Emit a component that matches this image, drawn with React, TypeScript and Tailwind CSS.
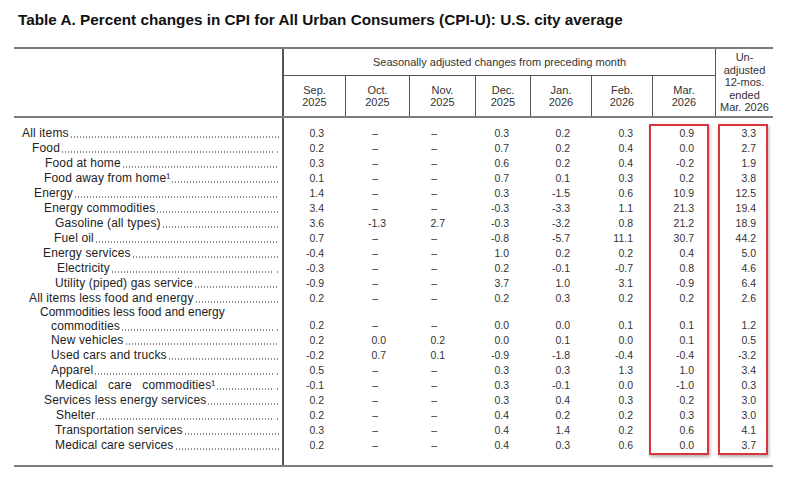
import React from "react";

type Row = {
  label: string;
  indent: number;
  values: string[];
  gap?: boolean;
  wide?: boolean;
  first?: string;
  firstIndent?: number;
};

const rows: Row[] = [
  { label: "All items", indent: 8, values: ["0.3", "–", "–", "0.3", "0.2", "0.3", "0.9", "3.3"] },
  { label: "Food", indent: 18, gap: true, values: ["0.2", "–", "–", "0.7", "0.2", "0.4", "0.0", "2.7"] },
  { label: "Food at home", indent: 31, values: ["0.3", "–", "–", "0.6", "0.2", "0.4", "-0.2", "1.9"] },
  { label: "Food away from home¹", indent: 30, values: ["0.1", "–", "–", "0.7", "0.1", "0.3", "0.2", "3.8"] },
  { label: "Energy", indent: 20, values: ["1.4", "–", "–", "0.3", "-1.5", "0.6", "10.9", "12.5"] },
  { label: "Energy commodities", indent: 30, values: ["3.4", "–", "–", "-0.3", "-3.3", "1.1", "21.3", "19.4"] },
  { label: "Gasoline (all types)", indent: 41, values: ["3.6", "-1.3", "2.7", "-0.3", "-3.2", "0.8", "21.2", "18.9"] },
  { label: "Fuel oil", indent: 40, values: ["0.7", "–", "–", "-0.8", "-5.7", "11.1", "30.7", "44.2"] },
  { label: "Energy services", indent: 29, values: ["-0.4", "–", "–", "1.0", "0.2", "0.2", "0.4", "5.0"] },
  { label: "Electricity", indent: 43, gap: true, values: ["-0.3", "–", "–", "0.2", "-0.1", "-0.7", "0.8", "4.6"] },
  { label: "Utility (piped) gas service", indent: 41, values: ["-0.9", "–", "–", "3.7", "1.0", "3.1", "-0.9", "6.4"] },
  { label: "All items less food and energy", indent: 15, values: ["0.2", "–", "–", "0.2", "0.3", "0.2", "0.2", "2.6"] },
  {
    label: "commodities",
    indent: 37,
    gap: true,
    first: "Commodities less food and energy",
    firstIndent: 26,
    values: ["0.2", "–", "–", "0.0", "0.0", "0.1", "0.1", "1.2"],
  },
  { label: "New vehicles", indent: 37, values: ["0.2", "0.0", "0.2", "0.0", "0.1", "0.0", "0.1", "0.5"] },
  { label: "Used cars and trucks", indent: 37, values: ["-0.2", "0.7", "0.1", "-0.9", "-1.8", "-0.4", "-0.4", "-3.2"] },
  { label: "Apparel", indent: 37, gap: true, values: ["0.5", "–", "–", "0.3", "0.3", "1.3", "1.0", "3.4"] },
  { label: "Medical care commodities¹", indent: 41, gap: true, wide: true, values: ["-0.1", "–", "–", "0.3", "-0.1", "0.0", "-1.0", "0.3"] },
  { label: "Services less energy services", indent: 30, values: ["0.2", "–", "–", "0.3", "0.4", "0.3", "0.2", "3.0"] },
  { label: "Shelter", indent: 42, gap: true, values: ["0.2", "–", "–", "0.4", "0.2", "0.2", "0.3", "3.0"] },
  { label: "Transportation services", indent: 41, values: ["0.3", "–", "–", "0.4", "1.4", "0.2", "0.6", "4.1"] },
  { label: "Medical care services", indent: 41, values: ["0.2", "–", "–", "0.4", "0.3", "0.6", "0.0", "3.7"] },
];

const months = [
  { m: "Sep.", y: "2025", w: "w-[62px]" },
  { m: "Oct.", y: "2025", w: "w-[64px]" },
  { m: "Nov.", y: "2025", w: "w-[66px]" },
  { m: "Dec.", y: "2025", w: "w-[55px]" },
  { m: "Jan.", y: "2026", w: "w-[61px]" },
  { m: "Feb.", y: "2026", w: "w-[61px]" },
  { m: "Mar.", y: "2026", w: "w-[62px]" },
];

// body columns: width + right padding so the figures line up with the header
const bodyCols = [
  "w-[62px] pr-[22px]",
  "w-[64px] pr-[24px]",
  "w-[66px] pr-[31px]",
  "w-[55px] pr-[22px]",
  "w-[61px] pr-[22px]",
  "w-[57px] pr-[16px]",
];

const dotBg = "bg-[radial-gradient(circle,#8a8a8a_0.55px,transparent_0.9px)] bg-size-[3px_2px] bg-repeat-x";

function Cell({ v, tall }: { v: string; tall?: boolean }) {
  return (
    <div className={`flex items-end justify-end ${tall ? "h-[27px]" : "h-[15px]"}`}>
      <span className={`h-[15px] leading-[15px] ${v === "–" ? "mr-[8px]" : ""}`}>{v}</span>
    </div>
  );
}

function ValueColumn({ idx }: { idx: number }) {
  return (
    <>
      {rows.map((r, i) => (
        <Cell key={i} v={r.values[idx]} tall={!!r.first} />
      ))}
    </>
  );
}

function LabelRow({ r }: { r: Row }) {
  const line = (
    <div className="flex h-[15px] items-end leading-[15px]" style={{ paddingLeft: r.indent }}>
      <span className={`whitespace-nowrap tracking-[0.15px] ${r.wide ? "[word-spacing:7px]" : ""}`}>{r.label}</span>
      <span className={`mb-[3px] ml-[1px] h-[2px] flex-1 ${dotBg}`} />
      {r.gap && <span className={`mb-[3px] ml-[3px] h-[2px] w-[3px] ${dotBg}`} />}
    </div>
  );
  if (r.first) {
    return (
      <div className="flex h-[27px] flex-col justify-end">
        <div className="h-[13px] whitespace-nowrap leading-[13px]" style={{ paddingLeft: r.firstIndent }}>
          {r.first}
        </div>
        <div className="-mb-px">{line}</div>
      </div>
    );
  }
  return line;
}

export default function App() {
  return (
    <div className="h-[489px] w-[796px] overflow-hidden bg-white font-['Liberation_Sans',Arial,sans-serif] text-[#2e2e2e]">
      <h1 className="pl-[18px] pt-[11px] text-[15.3px] font-bold leading-[18px] text-[#111]">
        Table A. Percent changes in CPI for All Urban Consumers (CPI-U): U.S. city average
      </h1>

      <div className="ml-[14px] mt-[18px] w-[759px]">
        {/* header */}
        <div className="flex border-t-2 border-[#7c7c7c] text-[11px] text-[#333]">
          <div className="w-[270px] border-r-2 border-[#555]" />
          <div className="flex w-[431px] flex-col">
            <div className="flex h-[27px] items-center justify-center border-b border-[#555]">
              Seasonally adjusted changes from preceding month
            </div>
            <div className="flex h-[40px]">
              {months.map((c, i) => (
                <div
                  key={c.m}
                  className={`${c.w} flex flex-col items-center justify-center leading-[12px] ${
                    i < months.length - 1 ? "border-r border-[#555]" : ""
                  }`}
                >
                  <span>{c.m}</span>
                  <span>{c.y}</span>
                </div>
              ))}
            </div>
          </div>
          <div className="flex w-[58px] flex-col items-center justify-center border-l border-[#555] leading-[12.5px]">
            <span>Un-</span>
            <span>adjusted</span>
            <span>12-mos.</span>
            <span>ended</span>
            <span>Mar. 2026</span>
          </div>
        </div>

        {/* body */}
        <div className="flex border-y-2 border-[#7c7c7c]">
          <div className="w-[270px] border-r-2 border-[#555] pb-[12px] pr-[3px] pt-[8px] text-[12px] text-[#222]">
            {rows.map((r) => (
              <LabelRow key={r.label} r={r} />
            ))}
          </div>
          <div className="flex text-[10.5px] text-[#333]">
            {bodyCols.map((c, i) => (
              <div key={i} className={`${c} pb-[12px] pt-[8px]`}>
                <ValueColumn idx={i} />
              </div>
            ))}
            <div className="w-[60px] pt-[6px]">
              <div className="border-2 border-[#d8363c] pr-[13px] shadow-[1px_2px_3px_rgba(0,0,0,0.3)]">
                <ValueColumn idx={6} />
              </div>
            </div>
            <div className="w-[9px]" />
            <div className="w-[50px] pt-[6px]">
              <div className="border-2 border-[#d8363c] pr-[10px] shadow-[1px_2px_3px_rgba(0,0,0,0.3)]">
                <ValueColumn idx={7} />
              </div>
            </div>
            <div className="w-[5px]" />
          </div>
        </div>
      </div>
    </div>
  );
}
